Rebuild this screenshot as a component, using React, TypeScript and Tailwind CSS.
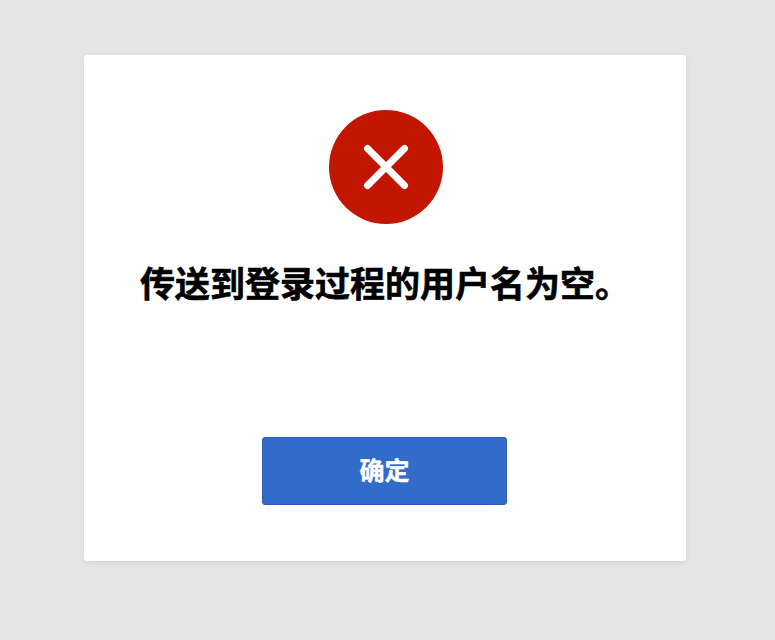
export default function App() {
  return (
    <div className="h-[640px] bg-[#e6e6e6] pt-[55px] pl-[84px] font-['Liberation_Sans','Noto_Sans_CJK_SC',sans-serif]">
      <div className="flex h-[506px] w-[602px] flex-col items-center rounded-[3px] bg-white pt-[55px] shadow-[0_2px_6px_rgba(0,0,0,0.08)]">
        <div className="ml-[2px] flex h-[114px] w-[114px] items-center justify-center rounded-full bg-[#c21600]">
          <svg width="46" height="46" viewBox="0 0 46 46" fill="none" stroke="white" strokeWidth="7" strokeLinecap="round">
            <path d="M4.5 4.5 41.5 41.5M41.5 4.5 4.5 41.5" />
          </svg>
        </div>
        <h1 className="mt-[37px] h-[48px] w-full whitespace-nowrap pl-[56px] text-[35px] font-bold leading-[48px] text-black [-webkit-text-stroke:0.6px_black]">传送到登录过程的用户名为空。</h1>
        <button className="mt-[128px] mr-[1px] h-[68px] w-[245px] rounded-[3px] border border-[#2a5fb5] bg-[#316ccb] pt-[2px] text-[25px] font-bold text-white [-webkit-text-stroke:0.4px_white]">确定</button>
      </div>
    </div>
  )
}
